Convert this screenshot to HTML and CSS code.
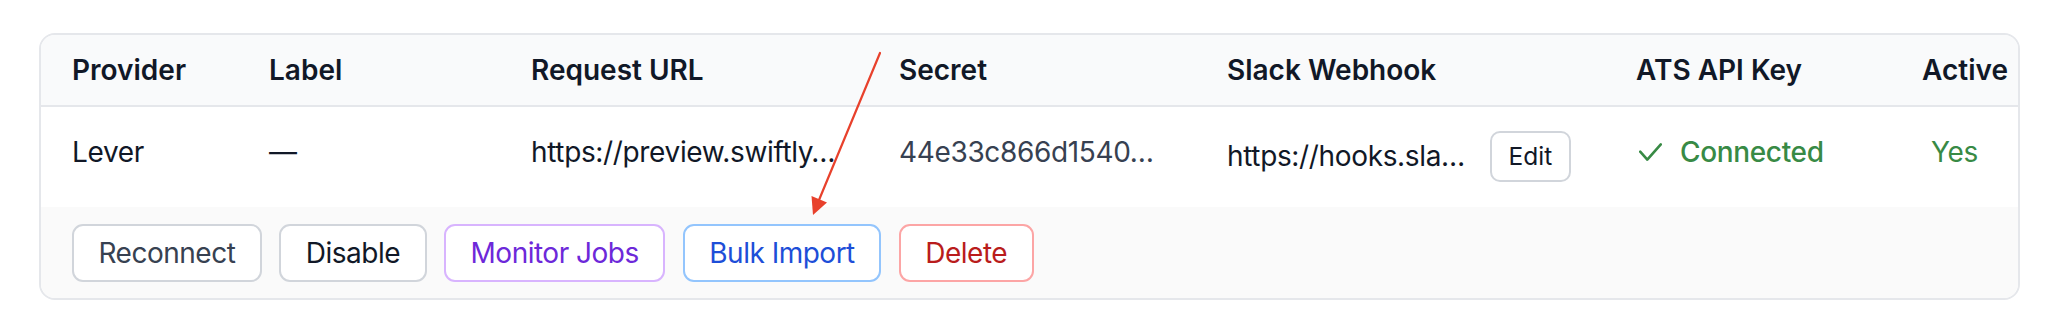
FILE: index.html
```html
<!DOCTYPE html>
<html lang="en">
<head>
<meta charset="utf-8">
<title>Integrations</title>
<link rel="stylesheet" href="styles.css">
</head>
<body>
<div class="page">
  <div class="card">
    <div class="row head">
      <div class="cell">Provider</div>
      <div class="cell">Label</div>
      <div class="cell">Request URL</div>
      <div class="cell">Secret</div>
      <div class="cell">Slack Webhook</div>
      <div class="cell">ATS API Key</div>
      <div class="cell">Active</div>
    </div>
    <div class="row body">
      <div class="cell">Lever</div>
      <div class="cell">—</div>
      <div class="cell"><span class="trunc url">https://preview.swiftly…</span></div>
      <div class="cell secret">44e33c866d1540…</div>
      <div class="cell hook">
        <span class="hook-text">https://hooks.sla…</span>
        <button class="edit">Edit</button>
      </div>
      <div class="cell status">
        <svg class="check" width="23" height="18" viewBox="0 0 23 18" aria-hidden="true"><polyline points="1.2,8.7 8.3,16.6 21.8,1.4" fill="none" stroke="#388a45" stroke-width="2.6" stroke-linecap="round" stroke-linejoin="round"/></svg>
        <span>Connected</span>
      </div>
      <div class="cell active"><span class="yes">Yes</span></div>
    </div>
    <div class="actions">
      <button class="btn btn-gray">Reconnect</button>
      <button class="btn btn-dark">Disable</button>
      <button class="btn btn-purple">Monitor Jobs</button>
      <button class="btn btn-blue">Bulk Import</button>
      <button class="btn btn-red">Delete</button>
    </div>
  </div>
  <svg class="annot" width="2056" height="336" viewBox="0 0 2056 336" aria-hidden="true">
    <line x1="880" y1="53" x2="819" y2="200" stroke="#e8412c" stroke-width="2.2" stroke-linecap="round"/>
    <polygon points="813,215 827,202.5 811.5,196" fill="#e8412c"/>
  </svg>
</div>
</body>
</html>
```

FILE: styles.css
```css
* { box-sizing: border-box; }
html, body { margin: 0; padding: 0; background: #ffffff; }
body {
  font-family: Inter, "Noto Sans", "Liberation Sans", sans-serif;
  color: #111827;
  width: 2056px;
  height: 336px;
  overflow: hidden;
}
.page { position: relative; width: 2056px; height: 336px; padding: 33px 0 0 39px; }
.card {
  width: 1981px;
  height: 267px;
  border: 2px solid #e5e7eb;
  border-radius: 16px;
  overflow: hidden;
  background: #ffffff;
}
.row {
  display: grid;
  grid-template-columns: 197px 262px 368px 328px 409px 286px 96px;
  padding-left: 31px;
  font-size: 28px;
  line-height: 42px;
}
.head {
  background: #f9fafb;
  border-bottom: 2px solid #e5e7eb;
  padding-top: 14px;
  padding-bottom: 14px;
  font-weight: 600;
  color: #111827;
}
.cell { white-space: nowrap; }
.body {
  padding-top: 24px;
  padding-bottom: 26px;
  align-items: start;
  color: #111827;
  letter-spacing: -0.35px;
}
.secret { color: #374151; }
.hook { display: flex; align-items: center; height: 50px; gap: 17.5px; }
.hook-text { display: inline-block; width: 245px; overflow: hidden; }
.edit {
  font-family: inherit;
  font-size: 24.5px;
  line-height: 35px;
  height: 51px;
  padding: 0 17px;
  border: 2px solid #d1d5db;
  border-radius: 10px;
  background: #ffffff;
  color: #111827;
  letter-spacing: 0;
}
.status {
  display: flex;
  align-items: center;
  color: #388a45;
  font-weight: 500;
}
.check { margin-left: 3px; margin-right: 18px; flex: none; }
.active { color: #388a45; }
.yes { margin-left: 9px; }
.actions {
  display: flex;
  gap: 17.5px;
  background: #fafafa;
  padding: 17px 31px 16px;
  height: 91px;
}
.btn {
  font-family: inherit;
  font-size: 28px;
  height: 58px;
  line-height: 54px;
  padding: 0 24.5px;
  border: 2px solid #d1d5db;
  border-radius: 11px;
  background: #ffffff;
  white-space: nowrap;
  letter-spacing: -0.5px;
}
.btn-gray { color: #374151; border-color: #d1d5db; }
.btn-dark { color: #111827; border-color: #d1d5db; }
.btn-purple { color: #6d28d9; border-color: #d8b4fe; }
.btn-blue { color: #1d4ed8; border-color: #93c5fd; }
.btn-red { color: #b91c1c; border-color: #fca5a5; }
.annot { position: absolute; left: 0; top: 0; pointer-events: none; }
```
